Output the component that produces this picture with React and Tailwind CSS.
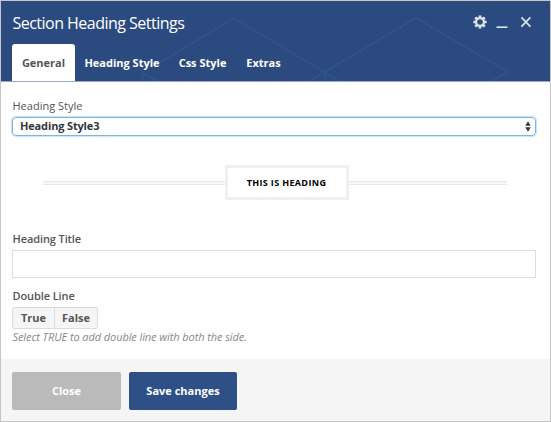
const tabs = [
  { label: "Heading Style", cls: "w-[94px]" },
  { label: "Css Style", cls: "w-[67px]" },
  { label: "Extras", cls: "w-[55px]" },
];

function Header() {
  return (
    <header className="relative h-[81px] shrink-0 overflow-hidden bg-[#2b4b80] border-b border-[#9aa9c4]">
      <svg className="absolute inset-0" width="549" height="80" fill="none" stroke="#31528a" strokeWidth="1.8">
        <path d="M142 80 V72 L157 80 M160 61 L233 17 L338 80 M308 80 L415 17 L507 71 L491 80 M324 71 V80" />
      </svg>
      <div className="relative flex h-[43px] items-center justify-between pl-[11.5px] pr-[18px]">
        <h1 className="text-[16px] leading-5 tracking-[-0.52px] text-white whitespace-nowrap">Section Heading Settings</h1>
        <div className="flex items-center text-[#dfe6f1]">
          <svg className="-mt-px" width="14" height="14" viewBox="0 0 14 14" fill="none" stroke="currentColor">
            <circle cx="7" cy="7" r="3.9" strokeWidth="2.2" />
            <path strokeWidth="2.6" d="M7 .4V2.8M7 11.2V13.6M.4 7H2.8M11.2 7H13.6M2.3 2.3L4 4M10 10L11.7 11.7M11.7 2.3L10 4M4 10L2.3 11.7" />
          </svg>
          <svg className="ml-[9px]" width="12" height="14" viewBox="0 0 12 14"><path d="M.5 11.2h11" stroke="currentColor" strokeWidth="1.6" /></svg>
          <svg className="ml-[12px] -mt-px" width="12" height="14" viewBox="0 0 12 14"><path d="M1.4 2.4l9 9.2M10.4 2.4l-9 9.2" stroke="currentColor" strokeWidth="1.6" /></svg>
        </div>
      </div>
      <nav className="relative flex h-[37px] pl-[11px] pt-px text-[11px] font-bold text-white">
        <span className="-mt-px flex h-[38px] w-[63px] items-center justify-center rounded-t-[3px] bg-white text-[#555]">General</span>
        {tabs.map((t) => (
          <span key={t.label} className={"flex items-center justify-center whitespace-nowrap " + t.cls}>{t.label}</span>
        ))}
      </nav>
    </header>
  );
}

export default function App() {
  return (
    <div className="flex h-[422px] w-[551px] flex-col border border-[#c6c6c6] bg-white font-['Open_Sans','Noto_Sans',sans-serif] text-[11px] text-[#555]">
      <Header />
      <main className="flex h-[277px] shrink-0 flex-col pl-[11px] pr-[14px] pt-[16px]">
        <label className="h-[19px] pl-[0.5px] leading-4 font-medium">Heading Style</label>
        <div className="flex h-[19px] shrink-0 items-center justify-between rounded-[4px] border border-[#7fb4dd] pl-[7px] pr-[4px] font-bold text-[#32373c] shadow-[0_0_1px_1px_#c5e0f4]">
          <span className="tracking-[-0.15px]">Heading Style3</span>
          <svg width="6" height="11" viewBox="0 0 6 11" fill="#333"><path d="M3 .3L5.7 4.7H.3ZM3 10.7L.3 6.3H5.7Z" /></svg>
        </div>
        <div className="mt-[29px] flex h-[35px] shrink-0 items-center pl-[31px] pr-[29px]">
          <div className="h-1 w-[182px] border-y border-[#e8e8e8] bg-[#f7f7f7]" />
          <div className="flex h-[35px] w-[124px] items-center justify-center border-[3px] border-[#f0f0f0] pr-px text-[9px] font-bold tracking-[0.35px] text-black whitespace-nowrap">THIS IS HEADING</div>
          <div className="h-1 flex-1 border-y border-[#e8e8e8] bg-[#f7f7f7]" />
        </div>
        <label className="mt-[31px] h-[19px] pl-[0.5px] leading-4 font-semibold tracking-[-0.1px]">Heading Title</label>
        <div className="h-7 shrink-0 border border-[#ddd]" />
        <label className="mt-[10px] h-[19px] pl-[0.5px] leading-4 font-semibold tracking-[-0.1px]">Double Line</label>
        <div className="flex h-[22px] w-[86px] shrink-0 rounded-[2px] border border-[#dcdcdc] bg-[#f5f5f5] font-bold">
          <span className="flex w-[42px] items-center justify-center border-r border-[#dcdcdc]">True</span>
          <span className="flex flex-1 items-center justify-center">False</span>
        </div>
        <p className="pl-[0.5px] leading-4 italic tracking-[-0.09px] text-[#888]">Select TRUE to add double line with both the side.</p>
      </main>
      <footer className="flex flex-1 gap-2 bg-[#f5f5f5] pl-[11px] pt-[13px] font-bold text-white">
        <button className="h-[38px] w-[109px] rounded-[2px] bg-[#bababa]">Close</button>
        <button className="h-[38px] w-[108px] rounded-[2px] bg-[#2e5087]">Save changes</button>
      </footer>
    </div>
  );
}
